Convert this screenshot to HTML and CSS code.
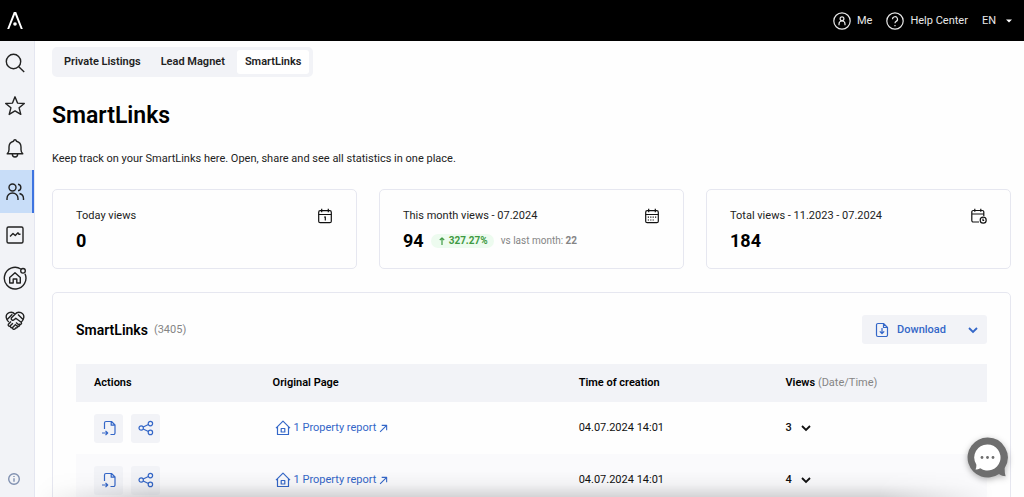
FILE: index.html
```html
<!DOCTYPE html>
<html lang="en">
<head>
<meta charset="utf-8">
<meta name="viewport" content="width=device-width, initial-scale=1">
<title>SmartLinks</title>
<link rel="stylesheet" href="styles.css">
</head>
<body>
<svg class="defs" aria-hidden="true">
  <symbol id="i-open" viewBox="0 0 16 16"><path d="M3.500 9V3a1.500 1.500 0 0 1 1.500-1.500h5.500L14 5v8a1.500 1.500 0 0 1-1.500 1.500H9.500M10.200 1.500V5.200H14M1 13h5.500M4.500 10.800 6.700 13l-2.200 2.200"/></symbol>
  <symbol id="i-share" viewBox="0 0 16 16"><circle cx="3.200" cy="8" r="2.200"/><circle cx="12.400" cy="3.600" r="2.200"/><circle cx="12.400" cy="12.400" r="2.200"/><path d="M5.200 7 10.400 4.500M5.200 9l5.200 2.500"/></symbol>
  <symbol id="i-house" viewBox="0 0 16 16"><path d="M1 8.200 8 1.200l7 7M2.500 7v7.500h11V7M6.200 8.500h3.600v3.500H6.200z"/></symbol>
  <symbol id="i-out" viewBox="0 0 10 10"><path d="M1.200 8.800 8.500 1.500M3 1.500h5.500V7"/></symbol>
  <symbol id="i-chev" viewBox="0 0 10 10"><path d="M1 3 5 7l4-4"/></symbol>
</svg>
<header class="topbar">
  <a class="logo" href="#" aria-label="Home"><svg width="18" height="20" viewBox="0 0 18 20"><path d="M1.200 18 7.800 1h2.400l6.600 17h-2L9 3.500 3.200 18z" fill="#fff"/><circle cx="9" cy="13" r="1.800" fill="#fff"/></svg></a>
  <nav class="account">
    <a href="#"><svg class="line" width="18" height="18" viewBox="0 0 18 18"><circle cx="9" cy="9" r="8.200"/><circle cx="9" cy="6.800" r="1.900"/><path d="M6 13.200V12a3 3 0 0 1 6 0v1.200"/></svg>Me</a>
    <a href="#"><svg class="line" width="18" height="18" viewBox="0 0 18 18"><circle cx="9" cy="9" r="8.200"/><path d="M6.500 7.300a2.500 2.500 0 1 1 3.700 2.100C9.300 9.900 9 10.300 9 11.300M9 13v1.200"/></svg>Help Center</a>
    <button class="lang" type="button">EN<svg width="6" height="4" viewBox="0 0 6 4"><path d="M0 .5h6L3 3.500z" fill="#fff"/></svg></button>
  </nav>
</header>
<div class="shell">
  <nav class="rail" aria-label="Main">
    <a href="#" aria-label="Search"><svg class="line" width="22" height="22" viewBox="0 0 22 22"><circle cx="9.500" cy="9.500" r="7.200"/><path d="m14.800 14.800 5.400 5.200"/></svg></a>
    <a href="#" aria-label="Favourites"><svg class="line" width="22" height="22" viewBox="0 0 22 22"><path d="m11 1.800 2.500 6.300 6.800.4-5.200 4.300 1.700 6.600L11 15.900l-5.800 3.500 1.700-6.600L1.700 8.500l6.800-.4z"/></svg></a>
    <a href="#" aria-label="Notifications"><svg class="line" width="22" height="22" viewBox="0 0 22 22"><path d="M3.200 15.800h15.600c-1.300-1-1.800-2.300-1.800-4V9a6 6 0 0 0-4.500-5.800C12 1.300 10 1.300 9.500 3.200A6 6 0 0 0 5 9v2.800c0 1.700-.5 3-1.800 4zM8.300 16c0 4 5.400 4 5.400 0"/></svg></a>
    <a href="#" class="active" aria-label="Clients" aria-current="page"><svg class="line" width="22" height="22" viewBox="0 0 22 22"><circle cx="8.500" cy="6.500" r="3.500"/><path d="M3 19v-1.500a5.500 5.500 0 0 1 11 0V19M14 3.200c3.800.6 3.800 6 0 6.600M15.500 12.500c2.600.8 4 2.600 4 5V19"/></svg></a>
    <a href="#" aria-label="Statistics"><svg class="line" width="22" height="22" viewBox="0 0 22 22"><rect x="3" y="3" width="16" height="16" rx="1.500"/><path d="m6 12.500 3-3 2.300 2 2.700-2.700 1 1.500h1.500"/></svg></a>
    <a href="#" aria-label="Properties"><svg class="line" width="24" height="24" viewBox="0 0 24 24"><path d="M17.800 3A10.800 10.800 0 1 0 22 7.800"/><circle cx="20" cy="4.800" r="2.300"/><path d="m6.700 11.500 5.300-4.800 5.300 4.800V17h-3.500v-4h-3.600v4H6.700z"/></svg></a>
    <a href="#" aria-label="Partners"><svg class="line" width="22" height="22" viewBox="0 0 22 22"><path d="M11 4.200C7.500.3 1.700 3 2.200 7.500c.2 2 1.300 3.300 2.600 4.500M11 4.200C14.500.3 20.300 3 19.800 7.500c-.2 2-1.200 3.400-2.600 4.800M11 4.200 7.300 8c-.6 2 1.600 3 3 1.500l1.500-1.200 5.400 4c1 1.500-.5 2.600-1.800 1.900 1 1.500-.6 2.800-2 1.900.6 1.500-1 2.500-2.200 1.500M7 11.500l-2.600 2.700c-.8 1.500.8 2.600 1.900 1.600l2.600-2.600M6.600 16c-.5 1.500 1 2.300 2 1.400l2.200-2.200M8.500 17.800c0 1.800 1.800 2.200 3 .6M12 12.500l3 2.500M10.800 14.200l2.500 2M3.200 9.500 8.300 4.200M14 4.500l4.800 4.800"/></svg></a>
    <a href="#" class="info" aria-label="About"><svg class="line" width="12" height="12" viewBox="0 0 12 12"><circle cx="6" cy="6" r="5.300"/><path d="M6 5.300v3.500M6 3v1.100"/></svg></a>
  </nav>
  <main class="page">
    <nav class="tabs" aria-label="Sections">
      <a href="#">Private Listings</a>
      <a href="#">Lead Magnet</a>
      <a href="#" class="selected" aria-current="page">SmartLinks</a>
    </nav>
    <h1>SmartLinks</h1>
    <p class="intro">Keep track on your SmartLinks here. Open, share and see all statistics in one place.</p>
    <section class="stats">
      <article class="card">
        <div class="card-head"><h2>Today views</h2><svg class="line" width="16" height="16" viewBox="0 0 16 16"><rect x="1.700" y="2.700" width="12.600" height="12" rx="1.500"/><path d="M1.700 6.500h12.600M4.700.8v3.400M11.300.8v3.400M7.300 9.400l1-.5v3.600"/></svg></div>
        <div class="figures"><strong>0</strong></div>
      </article>
      <article class="card">
        <div class="card-head"><h2>This month views - 07.2024</h2><svg class="line" width="16" height="16" viewBox="0 0 16 16"><rect x="1.700" y="2.700" width="12.600" height="12" rx="1.500"/><path d="M1.700 6.500h12.600M4.700.8v3.400M11.300.8v3.400"/><path d="M3.800 9.200h8.800M3.800 12h6" stroke-dasharray="1.200 1.200"/></svg></div>
        <div class="figures"><strong>94</strong><span class="badge"><svg class="line" width="6" height="8" viewBox="0 0 6 8"><path d="M3 8V.8M.8 3 3 .8 5.200 3"/></svg>327.27%</span><span class="versus">vs last month: <b>22</b></span></div>
      </article>
      <article class="card">
        <div class="card-head"><h2>Total views - 11.2023 - 07.2024</h2><svg class="line" width="16" height="16" viewBox="0 0 16 16"><path d="M8 14H2.300a1.500 1.500 0 0 1-1.500-1.500V4a1.500 1.500 0 0 1 1.500-1.500h9A1.500 1.500 0 0 1 12.800 4v4M.8 6h12M3.800.8v3M9.800.8v3"/><circle cx="12.200" cy="12.200" r="3"/><path d="M12 10.500v2h1.200"/></svg></div>
        <div class="figures"><strong>184</strong></div>
      </article>
    </section>
    <section class="panel">
      <div class="panel-head">
        <h2>SmartLinks</h2><span class="count">(3405)</span>
        <button class="download" type="button"><svg class="line" width="14" height="16" viewBox="0 0 14 16"><path d="M3 1.500h5.500l4 4V13a1.500 1.500 0 0 1-1.500 1.500H3A1.500 1.500 0 0 1 1.500 13V3A1.500 1.500 0 0 1 3 1.500zM8.500 1.500v4h4M7 6v5.500M4.800 9.300 7 11.500l2.200-2.200"/></svg><span>Download</span><svg class="chev" width="10" height="10"><use href="#i-chev"/></svg></button>
      </div>
      <table>
        <thead><tr><th class="c-actions">Actions</th><th class="c-page">Original Page</th><th class="c-time">Time of creation</th><th>Views <span>(Date/Time)</span></th></tr></thead>
        <tbody>
          <tr>
            <td><div class="actions"><button type="button" aria-label="Open"><svg class="line" width="16" height="16"><use href="#i-open"/></svg></button><button type="button" aria-label="Share"><svg class="line" width="16" height="16"><use href="#i-share"/></svg></button></div></td>
            <td><a class="report" href="#"><svg class="line" width="16" height="16"><use href="#i-house"/></svg>1 Property report<svg class="line" width="9" height="9"><use href="#i-out"/></svg></a></td>
            <td>04.07.2024 14:01</td>
            <td><button class="views" type="button">3<svg class="chev" width="10" height="10"><use href="#i-chev"/></svg></button></td>
          </tr>
          <tr>
            <td><div class="actions"><button type="button" aria-label="Open"><svg class="line" width="16" height="16"><use href="#i-open"/></svg></button><button type="button" aria-label="Share"><svg class="line" width="16" height="16"><use href="#i-share"/></svg></button></div></td>
            <td><a class="report" href="#"><svg class="line" width="16" height="16"><use href="#i-house"/></svg>1 Property report<svg class="line" width="9" height="9"><use href="#i-out"/></svg></a></td>
            <td>04.07.2024 14:01</td>
            <td><button class="views" type="button">4<svg class="chev" width="10" height="10"><use href="#i-chev"/></svg></button></td>
          </tr>
        </tbody>
      </table>
    </section>
  </main>
</div>
<div class="fade"></div>
<button class="chat" type="button" aria-label="Chat"><svg width="42" height="42" viewBox="0 0 42 42"><path d="M20.500.5a20 20 0 1 0 11.500 36.400c2 1.500 4.200 2.200 6.600 2.300-.8-2.300-1-5-.9-8.100A20 20 0 0 0 20.500.5z" fill="#6e6e6e"/><path d="M20.500 7.500a13 13 0 1 1-7.200 23.800c-1.500.9-3 1.300-4.800 1.300.8-1.700 1-3.200.8-5.200A13 13 0 0 1 20.500 7.500z" fill="#fff"/><g fill="#6e6e6e"><circle cx="15" cy="20.500" r="1.400"/><circle cx="20.500" cy="20.500" r="1.400"/><circle cx="26" cy="20.500" r="1.400"/></g></svg></button>
</body>
</html>
```
FILE: styles.css
```css
* { box-sizing: border-box; }
body {
  margin: 0;
  height: 100vh;
  display: flex;
  flex-direction: column;
  overflow: hidden;
  background: #fefefe;
  color: #111;
  font: 11px/16px Roboto, "Liberation Sans", Arial, sans-serif;
}
a { color: inherit; text-decoration: none; }
button { font: inherit; color: inherit; border: 0; padding: 0; background: none; cursor: pointer; }
svg { display: block; flex: none; }
.defs { display: none; }
.line { fill: none; stroke: currentColor; stroke-width: 1.2; stroke-linejoin: round; }
.chev { fill: none; stroke: currentColor; stroke-width: 1.8; }

.topbar {
  flex: none;
  height: 41px;
  padding: 0 12px 0 6px;
  display: flex;
  align-items: center;
  justify-content: space-between;
  background: #000;
  color: #e8e8e8;
}
.account { display: flex; gap: 14px; }
.account a { display: flex; align-items: center; gap: 6px; }
.lang { display: flex; align-items: center; gap: 10px; }

.shell { flex: 1; min-height: 0; display: flex; }
.rail {
  flex: none;
  width: 35px;
  display: flex;
  flex-direction: column;
  background: #f2f3f7;
  border-right: 1px solid #e4e6f0;
  color: #222;
}
.rail a { height: 43px; padding-right: 5px; display: flex; align-items: center; justify-content: center; flex: none; }
.rail .line { stroke-width: 1.4; }
.rail .active { background: #c8ddf8; box-shadow: inset -2px 0 #3d74e0; }
.rail .info { margin-top: auto; height: 36px; padding-right: 6px; color: #8090b0; }

.page { flex: 1; min-width: 0; padding: 6px 13px 0 17px; overflow: hidden; }
.tabs {
  width: fit-content;
  padding: 3px 4px;
  display: flex;
  gap: 4px;
  background: #f2f3f7;
  border-radius: 5px;
  font-weight: 600;
  color: #222;
}
.tabs a { padding: 4px 8px; border-radius: 3px; }
.tabs .selected { background: #fff; }
h1 { margin: 25px 0 21px; font-size: 23px; line-height: 28px; font-weight: 600; color: #000; }
.intro { margin: 0 0 22px; color: #222; }

.stats { display: grid; grid-template-columns: repeat(3, 1fr); gap: 22px; }
.card { padding: 18px 23px 15px; border: 1px solid #e6e7f0; border-radius: 5px; }
.card-head { display: flex; justify-content: space-between; align-items: center; }
.card h2 { margin: 0; font-size: 11px; font-weight: normal; color: #222; }
.figures { display: flex; align-items: center; gap: 7px; margin-top: 5px; line-height: 24px; }
.figures strong { font-size: 18px; color: #000; }
.badge {
  display: flex;
  align-items: center;
  gap: 4px;
  padding: 0 6px 0 8px;
  border-radius: 7px;
  background: #edfbef;
  color: #3f9a43;
  font-size: 10px;
  font-weight: bold;
  line-height: 14px;
}
.versus { font-size: 10px; color: #858585; }

.panel { margin-top: 23px; padding: 22px 23px 30px; border: 1px solid #e6e7f0; border-radius: 5px; }
.panel-head { display: flex; align-items: center; gap: 6px; }
.panel-head h2 { margin: 0; font-size: 14px; font-weight: 600; color: #000; }
.count { color: #858585; }
.download {
  margin-left: auto;
  height: 29px;
  padding: 0 9px 0 13px;
  display: flex;
  align-items: center;
  background: #f2f3f7;
  border-radius: 3px;
  color: #3467c8;
  font-weight: 500;
}
.download span { margin: 0 22px 0 8px; }

table { width: 100%; margin-top: 20px; border-collapse: collapse; table-layout: fixed; }
th, td { padding: 0 18px; text-align: left; }
th { height: 38px; background: #f2f3f7; font-weight: 600; color: #000; }
th span { font-weight: normal; color: #858585; }
td { height: 52px; }
tbody tr:nth-child(even) { background: #fafafc; }
.c-actions { width: 19.6%; }
.c-page { width: 33.6%; }
.c-time { width: 22.7%; }
.actions { display: flex; gap: 8px; }
.actions button {
  width: 29px;
  height: 29px;
  display: flex;
  align-items: center;
  justify-content: center;
  background: #f2f3f7;
  border-radius: 3px;
  color: #3467c8;
}
.report { display: flex; align-items: center; gap: 3px; padding-left: 2px; color: #3467c8; }
.views { display: flex; align-items: center; gap: 9px; font-weight: 500; }

.fade {
  position: fixed;
  left: 35px;
  right: 30px;
  bottom: 0;
  height: 26px;
  pointer-events: none;
  background: linear-gradient(transparent, rgba(0, 0, 0, .03) 50%, rgba(0, 0, 0, .15));
  mask-image: linear-gradient(90deg, transparent, #000 12%, #000 88%, transparent);
}
.chat { position: fixed; right: 15px; bottom: 18px; filter: drop-shadow(0 2px 3px rgba(0, 0, 0, .3)); }
```
